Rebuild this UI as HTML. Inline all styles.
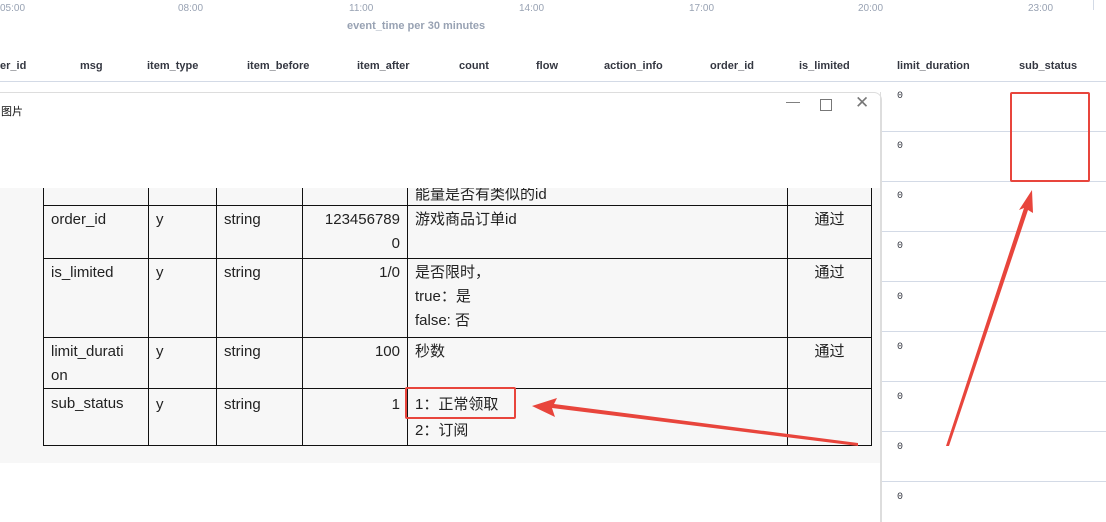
<!DOCTYPE html>
<html><head><meta charset="utf-8"><style>
html,body{margin:0;width:1106px;height:522px;overflow:hidden}
body{position:relative;background:#fff;font-family:"Liberation Sans","Noto Sans CJK SC",sans-serif}
.a{position:absolute}
.tick{font-size:10px;color:#98a2b3;top:3px}
.hd{font-size:11px;font-weight:bold;color:#343741;top:60px}
.z{font-family:"Liberation Mono",monospace;font-size:10px;color:#343741;left:897px}
.hl{left:880px;width:226px;height:1px;background:#d3dae6}
td{border:1px solid #111;font-size:15px;color:#222;vertical-align:top;padding:2px 7px 0;line-height:24px;box-sizing:border-box}
table{border-collapse:collapse;position:absolute;table-layout:fixed}
</style></head><body>
<div class="a tick" style="left:0">05:00</div>
<div class="a tick" style="left:178px">08:00</div>
<div class="a tick" style="left:349px">11:00</div>
<div class="a tick" style="left:519px">14:00</div>
<div class="a tick" style="left:689px">17:00</div>
<div class="a tick" style="left:858px">20:00</div>
<div class="a tick" style="left:1028px">23:00</div>
<div class="a" style="left:1093px;top:0;width:1px;height:10px;background:#d3dae6"></div>
<div class="a" style="left:347px;top:20px;font-size:11px;font-weight:bold;color:#98a2b3">event_time per 30 minutes</div>
<div class="a hd" style="left:0">er_id</div>
<div class="a hd" style="left:80px">msg</div>
<div class="a hd" style="left:147px">item_type</div>
<div class="a hd" style="left:247px">item_before</div>
<div class="a hd" style="left:357px">item_after</div>
<div class="a hd" style="left:459px">count</div>
<div class="a hd" style="left:536px">flow</div>
<div class="a hd" style="left:604px">action_info</div>
<div class="a hd" style="left:710px">order_id</div>
<div class="a hd" style="left:799px">is_limited</div>
<div class="a hd" style="left:897px">limit_duration</div>
<div class="a hd" style="left:1019px">sub_status</div>
<div class="a" style="left:0;top:81px;width:1106px;height:1px;background:#d3dae6"></div>
<div class="a hl" style="top:131px"></div><div class="a hl" style="top:181px"></div><div class="a hl" style="top:231px"></div><div class="a hl" style="top:281px"></div><div class="a hl" style="top:331px"></div><div class="a hl" style="top:381px"></div><div class="a hl" style="top:431px"></div><div class="a hl" style="top:481px"></div>
<div class="a z" style="top:91px">0</div><div class="a z" style="top:141px">0</div><div class="a z" style="top:191px">0</div><div class="a z" style="top:241px">0</div><div class="a z" style="top:292px">0</div><div class="a z" style="top:342px">0</div><div class="a z" style="top:392px">0</div><div class="a z" style="top:442px">0</div><div class="a z" style="top:492px">0</div>
<div class="a" style="left:-10px;top:92px;width:890px;height:429px;background:#fff;border:1px solid #ddd;border-bottom:none;border-radius:8px 8px 0 0;overflow:hidden">
<div class="a" style="left:10px;top:10px;font-size:11px;color:#111">图片</div>
<div class="a" style="left:795px;top:0;font-size:14px;color:#777">—</div>
<div class="a" style="left:829px;top:6px;width:10px;height:10px;border:1px solid #777"></div>
<div class="a" style="left:864px;top:0;font-size:17px;color:#777">✕</div>
<div class="a" style="left:0;top:95px;width:890px;height:275px;background:#f7f7f7;overflow:hidden">
<table style="left:52px;top:-17px">
<colgroup><col style="width:105px"><col style="width:68px"><col style="width:86px"><col style="width:105px"><col style="width:380px"><col style="width:84px"></colgroup>
<tr style="height:34px"><td></td><td></td><td></td><td></td><td style="vertical-align:bottom;line-height:20px;padding:0 7px">能量是否有类似的id</td><td></td></tr>
<tr style="height:53px"><td>order_id</td><td>y</td><td>string</td><td style="text-align:right">123456789<br>0</td><td>游戏商品订单id</td><td style="text-align:center">通过</td></tr>
<tr style="height:79px"><td>is_limited</td><td>y</td><td>string</td><td style="text-align:right">1/0</td><td>是否限时，<br>true：是<br>false: 否</td><td style="text-align:center">通过</td></tr>
<tr style="height:51px"><td>limit_durati<br>on</td><td>y</td><td>string</td><td style="text-align:right">100</td><td>秒数</td><td style="text-align:center">通过</td></tr>
<tr style="height:57px"><td style="padding-top:3px">sub_status</td><td style="padding-top:4px">y</td><td style="padding-top:4px">string</td><td style="text-align:right;padding-top:4px">1</td><td style="padding-top:3px;line-height:26px">1：正常领取<br>2：订阅</td><td></td></tr>
</table>
</div>
</div>
<div class="a" style="left:880px;top:92px;width:1px;height:430px;background:#ddd"></div>
<div class="a" style="left:405px;top:387px;width:107px;height:28px;border:2px solid #e8453c;border-radius:2px"></div>
<div class="a" style="left:1010px;top:92px;width:76px;height:86px;border:2px solid #e8453c;border-radius:2px"></div>
<svg class="a" style="left:0;top:0" width="1106" height="522">
<polygon points="858,446 552,408 555,417 532,406 557,398 554,404 858,443" fill="#e8453c"/>
<polygon points="946,446 1024,208 1019,210 1032,190 1033,213 1028,210 949,446" fill="#e8453c"/>
</svg>
</body></html>
